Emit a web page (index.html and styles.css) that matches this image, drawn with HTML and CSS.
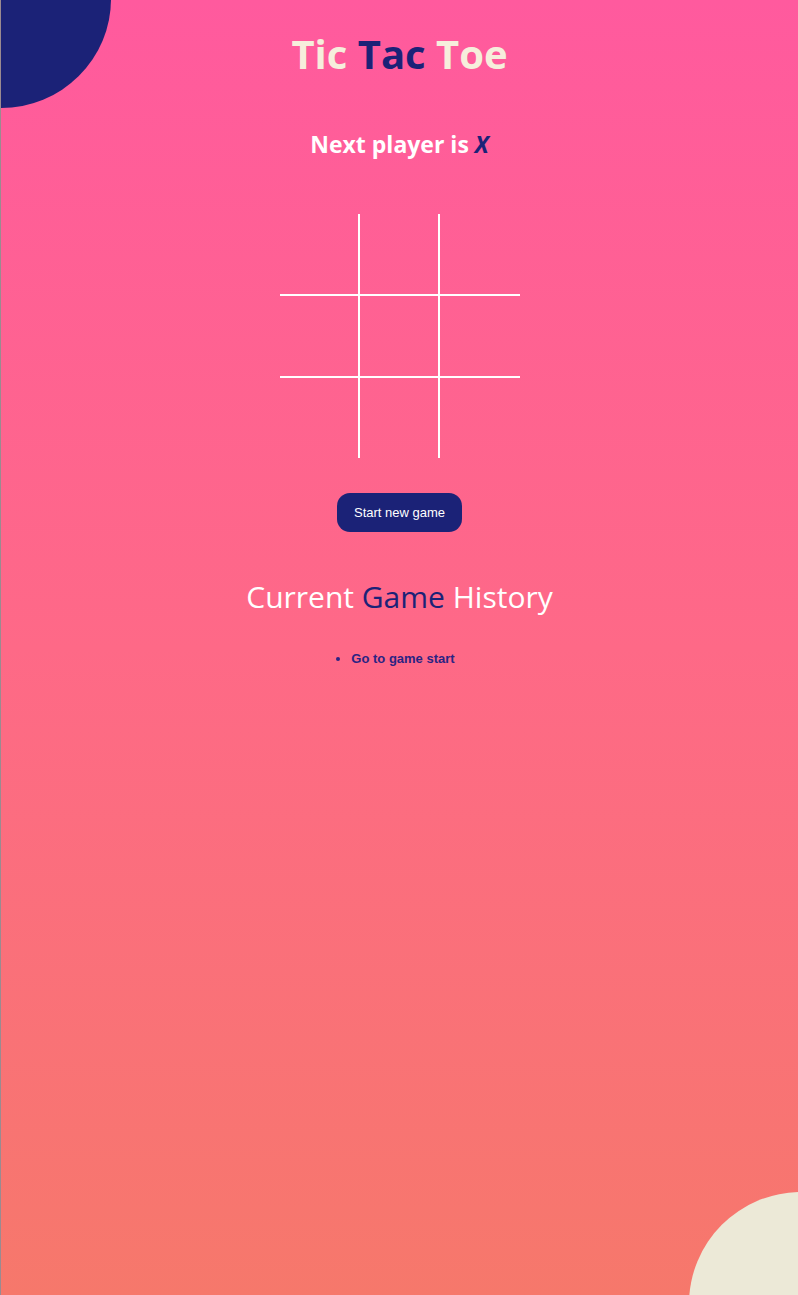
FILE: index.html
```html
<!DOCTYPE html>
<html>
<head>
<meta charset="utf-8">
<link rel="stylesheet" href="styles.css">
</head>
<body>
<div class="page">
  <div class="blob blob-top"></div>
  <div class="blob blob-bottom"></div>
  <main class="game">
    <h1 class="title">Tic <span class="accent">Tac</span> Toe</h1>
    <h2 class="status">Next player is <em class="player">X</em></h2>
    <div class="board">
      <div class="cell"></div><div class="cell"></div><div class="cell"></div>
      <div class="cell"></div><div class="cell"></div><div class="cell"></div>
      <div class="cell"></div><div class="cell"></div><div class="cell"></div>
    </div>
    <button class="new-game">Start new game</button>
    <h2 class="history-title">Current <span class="accent">Game</span> History</h2>
    <ul class="history">
      <li><a class="history-link">Go to game start</a></li>
    </ul>
  </main>
</div>
</body>
</html>
```
FILE: styles.css
```css
html, body {
  margin: 0;
  padding: 0;
}
body {
  width: 798px;
  height: 1295px;
  overflow: hidden;
}
.page {
  position: relative;
  width: 798px;
  height: 1295px;
  overflow: hidden;
  background: linear-gradient(180deg, #ff5a9e 0%, #fe6987 50%, #f6786b 100%);
  border-left: 1px solid #9a8a90;
  box-sizing: border-box;
}
.blob {
  position: absolute;
  border-radius: 50%;
}
.blob-top {
  width: 220px;
  height: 218px;
  left: -110px;
  top: -110px;
  background: #1b2277;
}
.blob-bottom {
  width: 224px;
  height: 224px;
  left: 688px;
  top: 1192px;
  background: #ece9d7;
}
.game {
  position: relative;
  display: flex;
  flex-direction: column;
  align-items: center;
}
.title {
  margin: 29px 0 0;
  font-family: "Open Sans", sans-serif;
  font-weight: 700;
  font-size: 40px;
  line-height: 50px;
  color: #f6eedc;
}
.accent {
  color: #1b2277;
}
.status {
  margin: 50px 0 0;
  font-family: "Open Sans", sans-serif;
  font-weight: 700;
  font-size: 23px;
  line-height: 30px;
  color: #fff;
}
.player {
  color: #1b2277;
  font-style: italic;
}
.board {
  margin-top: 55px;
  display: grid;
  grid-template-columns: 80px 80px 80px;
  grid-template-rows: 82px 82px 80px;
}
.cell {
  box-sizing: border-box;
}
.cell:nth-child(3n+1), .cell:nth-child(3n+2) {
  border-right: 2px solid #fff;
}
.cell:nth-child(-n+6) {
  border-bottom: 2px solid #fff;
}
.new-game {
  margin-top: 35px;
  width: 125px;
  height: 39px;
  border: none;
  border-radius: 13px;
  background: #1b2277;
  color: #fff;
  font-family: "Liberation Sans", Arial, sans-serif;
  font-size: 13px;
  padding: 0;
}
.history-title {
  margin: 45px 0 0;
  font-family: "Open Sans", sans-serif;
  font-weight: 400;
  font-size: 30px;
  line-height: 40px;
  color: #fff;
}
.history {
  margin: 34px 0 0;
  padding: 0 0 0 7px;
  color: #2a2383;
  font-family: "Liberation Sans", Arial, sans-serif;
  font-size: 13px;
  font-weight: 700;
  line-height: 16px;
}
.history-link {
  color: #2a2383;
}
```
